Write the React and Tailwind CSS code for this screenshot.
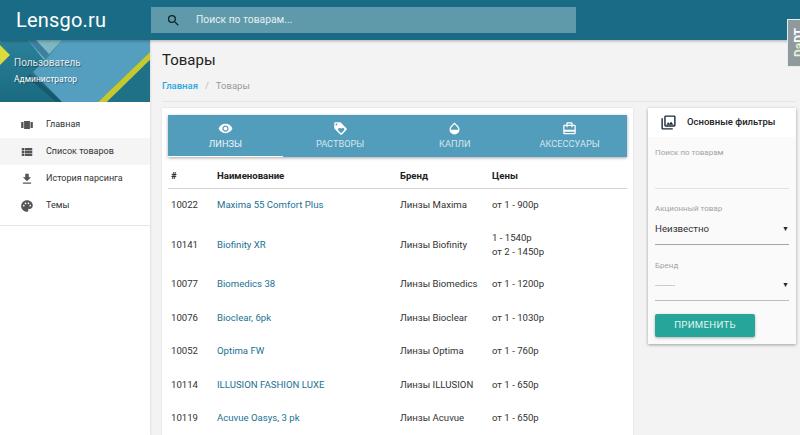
import React from "react";
import {
  MdSearch,
  MdViewCarousel,
  MdViewList,
  MdFileDownload,
  MdPalette,
  MdRemoveRedEye,
  MdLoyalty,
  MdOpacity,
  MdCardTravel,
  MdOutlinePhotoLibrary,
} from "react-icons/md";

const menu = [
  { label: "Главная", icon: MdViewCarousel },
  { label: "Список товаров", icon: MdViewList, active: true },
  { label: "История парсинга", icon: MdFileDownload },
  { label: "Темы", icon: MdPalette },
];

const tabs = [
  { label: "ЛИНЗЫ", icon: MdRemoveRedEye, active: true },
  { label: "РАСТВОРЫ", icon: MdLoyalty },
  { label: "КАПЛИ", icon: MdOpacity },
  { label: "АКСЕССУАРЫ", icon: MdCardTravel },
];

const rows = [
  { id: 10022, name: "Maxima 55 Comfort Plus", brand: "Линзы Maxima", price: ["от 1 - 900р"] },
  { id: 10141, name: "Biofinity XR", brand: "Линзы Biofinity", price: ["1 - 1540р", "от 2 - 1450р"] },
  { id: 10077, name: "Biomedics 38", brand: "Линзы Biomedics", price: ["от 1 - 1200р"] },
  { id: 10076, name: "Bioclear, 6pk", brand: "Линзы Bioclear", price: ["от 1 - 1030р"] },
  { id: 10052, name: "Optima FW", brand: "Линзы Optima", price: ["от 1 - 760р"] },
  { id: 10114, name: "ILLUSION FASHION LUXE", brand: "Линзы ILLUSION", price: ["от 1 - 650р"] },
  { id: 10119, name: "Acuvue Oasys, 3 pk", brand: "Линзы Acuvue", price: ["от 1 - 650р"] },
];

function Banner() {
  return (
    <svg className="block" width="150" height="62" viewBox="0 0 150 62">
      <defs>
        <linearGradient id="teal" x1="0" y1="0" x2="0" y2="1">
          <stop offset="0" stopColor="#2a8199" />
          <stop offset="1" stopColor="#1a6a80" />
        </linearGradient>
      </defs>
      <rect width="150" height="62" fill="url(#teal)" />
      <polygon points="30,34 64,62 56,62 27,37" fill="#124a5c" opacity="0.55" />
      <polygon points="62,0 150,0 150,12 98,62 62,62 33,32 47,18" fill="#549fc0" />
      <polygon points="28,0 62,0 44,20" fill="#7fb8c2" />
      <polygon points="28,0 36,0 49,14 45,19" fill="#3c7f9f" />
      <polygon points="0,5 10,15 0,25" fill="#d9dc3c" />
      <polygon points="98,62 107,62 150,20 150,12" fill="#c5c92f" />
      <polygon points="107,62 150,62 150,20" fill="#1f7188" />
    </svg>
  );
}

function Field({ label, value, valueClass, lineClass, height }) {
  return (
    <div className={`flex flex-col pt-[1px] ${height}`}>
      <div className="text-[8px] leading-[10px] text-[#a3a3a3]">{label}</div>
      <div className={`flex flex-1 items-center justify-between ${valueClass}`}>
        <span>{value}</span>
        {value && <span className="text-[7px] text-[#222]">▼</span>}
      </div>
      <div className={`h-px ${lineClass}`}></div>
    </div>
  );
}

export default function App() {
  return (
    <div className="relative flex h-[435px] w-[800px] flex-col overflow-hidden bg-[#f3f3f3] font-['Roboto',sans-serif] text-[#222]">
      <header className="z-10 flex h-[40px] shrink-0 items-center bg-[#1a6b85] shadow-[0_1px_3px_rgba(0,0,0,0.3)]">
        <div className="w-[151px] pl-4 text-[20px] tracking-[0.2px] text-white">Lensgo.ru</div>
        <div className="flex h-[26px] w-[425px] items-center bg-[#5f9aab]">
          <MdSearch className="ml-[15px] text-[#10222b]" size={15} />
          <span className="ml-[15px] text-[10.3px] text-[#e6eff2]">Поиск по товарам...</span>
        </div>
      </header>

      <div className="flex min-h-0 flex-1">
        <aside className="w-[150px] shrink-0 bg-white shadow-[1px_0_2px_rgba(0,0,0,0.08)]">
          <div className="relative h-[62px]">
            <Banner />
            <div className="absolute left-[14px] top-[18px] text-[10px] leading-none text-[#e4e9ea] [text-shadow:1px_1px_1px_rgba(0,0,0,0.4)]">
              Пользователь
            </div>
            <div className="absolute left-[14px] top-[35px] text-[8.5px] leading-none text-white [text-shadow:1px_1px_1px_rgba(0,0,0,0.4)]">
              Администратор
            </div>
          </div>
          <nav className="border-b border-[#e6e6e6] pb-[6px] pt-[9px]">
            {menu.map((item) => {
              const Icon = item.icon;
              return (
                <div
                  key={item.label}
                  className={`flex h-[27px] items-center pl-[20px] text-[9px] text-[#333] ${item.active ? "bg-[#f5f5f5]" : ""}`}
                >
                  <Icon size={14} className="text-[#555]" />
                  <span className="ml-[12px]">{item.label}</span>
                </div>
              );
            })}
          </nav>
        </aside>

        <main className="min-w-0 flex-1 pl-[12px] pr-[4px]">
          <h1 className="pt-[10px] text-[15px] leading-[20px] text-[#222]">Товары</h1>
          <div className="flex h-[32px] items-center border-b border-[#e6e6e6] pt-[2px] text-[9.5px]">
            <span className="font-medium text-[#2ba6e0]">Главная</span>
            <span className="mx-[7px] text-[#bbb]">/</span>
            <span className="text-[#999]">Товары</span>
          </div>

          <div className="mt-[6px] flex items-start gap-[15px]">
            <section className="h-[400px] w-[471px] bg-white px-[6px] pt-[7px] shadow-[0_0_2px_rgba(0,0,0,0.1)]">
              <div className="flex h-[42px] bg-[#529dbb] shadow-[0_1px_3px_rgba(0,0,0,0.35)]">
                {tabs.map((tab) => {
                  const Icon = tab.icon;
                  return (
                    <div
                      key={tab.label}
                      className={`flex flex-1 flex-col items-center border-b-[1.5px] pt-[6px] ${tab.active ? "border-white text-[#eef6f9]" : "border-transparent text-[#d5e6ed]"}`}
                    >
                      <Icon size={15} className="text-white" />
                      <span className="mt-[2px] text-[9.2px] leading-[12px]">{tab.label}</span>
                    </div>
                  );
                })}
              </div>
              <table className="mt-[7px] w-[459px] table-fixed border-collapse text-[9.6px] leading-[14px]">
                <colgroup>
                  <col className="w-[49px]" />
                  <col className="w-[183px]" />
                  <col className="w-[92px]" />
                  <col />
                </colgroup>
                <thead>
                  <tr className="h-[24px] border-b border-[#d5d5d5] text-left font-bold text-[#222]">
                    <th className="pl-[3px] font-bold">#</th>
                    <th className="font-bold">Наименование</th>
                    <th className="font-bold">Бренд</th>
                    <th className="font-bold">Цены</th>
                  </tr>
                </thead>
                <tbody>
                  {rows.map((row) => (
                    <tr key={row.id} className={row.price.length > 1 ? "h-[46px]" : "h-[33.5px]"}>
                      <td className="pl-[3px] text-[#333]">{row.id}</td>
                      <td className="text-[#1a7194]">{row.name}</td>
                      <td className="text-[#333]">{row.brand}</td>
                      <td className="text-[#333]">
                        {row.price.map((p) => (
                          <div key={p}>{p}</div>
                        ))}
                      </td>
                    </tr>
                  ))}
                </tbody>
              </table>
            </section>

            <section className="h-[236px] w-[148px] bg-[#fafafa] shadow-[0_1px_3px_rgba(0,0,0,0.35)]">
              <div className="flex h-[29px] items-center bg-white pl-[12px] text-[9.5px] font-medium text-[#222]">
                <MdOutlinePhotoLibrary size={17} className="text-[#1d2b3a]" />
                <span className="ml-[10px]">Основные фильтры</span>
              </div>
              <div className="flex flex-col px-[7px] pt-[10px]">
                <Field label="Поиск по товарам" height="h-[42px]" lineClass="bg-[#e3e3e3]" />
                <div className="h-[14px]"></div>
                <Field
                  label="Акционный товар"
                  value="Неизвестно"
                  valueClass="text-[9.7px] text-[#333]"
                  height="h-[42px]"
                  lineClass="bg-[#a5a5a5]"
                />
                <div className="h-[15px]"></div>
                <Field
                  label="Бренд"
                  value="---------"
                  valueClass="text-[8px] text-[#9a9a9a]"
                  height="h-[41px]"
                  lineClass="bg-[#bdbdbd]"
                />
                <button className="mt-[13px] h-[23px] w-[100px] rounded-[2px] bg-[#26a69a] text-[9.6px] tracking-[0.3px] text-[#e3f5f2] shadow-[0_1px_3px_rgba(0,0,0,0.3)]">
                  ПРИМЕНИТЬ
                </button>
              </div>
            </section>
          </div>
        </main>
      </div>

      <div className="absolute left-[787px] top-[19px] z-20 flex h-[48px] w-[13px] items-center overflow-hidden border-y border-l border-[#e8ecec] bg-[#8f9a9c] pl-[5px]">
        <span className="rotate-180 whitespace-nowrap text-[12px] font-bold leading-[12px] [writing-mode:vertical-rl]">
          <span className="text-[#e4f2d0]">Da</span>
          <span className="text-white">DT</span>
        </span>
      </div>
    </div>
  );
}
